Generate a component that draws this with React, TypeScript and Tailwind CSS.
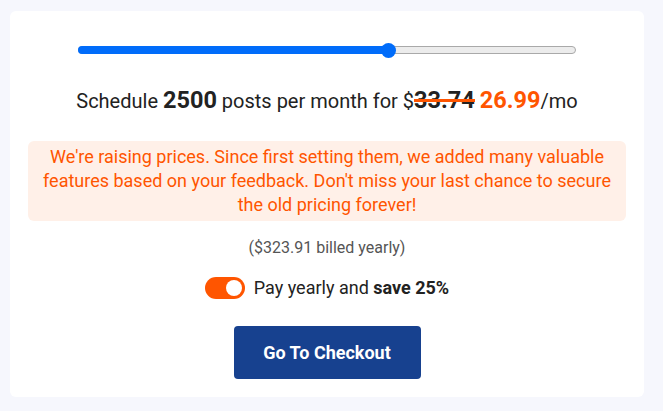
export default function App() {
  return (
    <main className="min-h-screen w-[663px] h-[411px] bg-[#f6f7fd] pt-[11px] pl-[10px] pr-[19px] font-['Roboto',sans-serif]">
      <section className="flex h-[386px] flex-col items-center rounded-md bg-white px-[18px] pt-[34px]">
        {/* slider */}
        <div className="relative h-[10px] w-[498px]">
          <div className="absolute left-0 right-0 top-[1px] h-[8px] rounded-full border border-[#a9a9a9] bg-[#ececec]" />
          <div className="absolute left-0 top-[1px] h-[8px] w-[312px] rounded-full bg-[#006cfa]" />
          <div className="absolute left-[303px] top-[-2px] h-[15px] w-[15px] rounded-full bg-[#006cfa]" />
        </div>

        <p className="mt-[32px] h-[28px] text-[20px] leading-[28px] text-[#222]">
          Schedule <span className="text-[23.5px] font-bold leading-[20px]">2500</span> posts per month for $
          <span className="relative text-[23.5px] font-bold leading-[20px]">
            33.74
            <span className="absolute left-0 right-0 top-[13px] h-[3px] bg-[#ff5500]" />
          </span>{' '}
          <span className="text-[23.5px] font-bold leading-[20px] text-[#ff5500]">26.99</span>/mo
        </p>

        <div className="mt-[26px] w-full rounded-md bg-[#fff0e8] px-[12px] py-[4px] text-center text-[18px] leading-[24px] text-[#ff5500]">
          We're raising prices. Since first setting them, we added many valuable features based on your feedback. Don't
          miss your last chance to secure the old pricing forever!
        </div>

        <p className="mt-[17px] text-[16px] leading-[20px] text-[#555]">($323.91 billed yearly)</p>

        <div className="mt-[19px] flex h-[22px] items-center gap-[9px]">
          <div className="flex h-[22px] w-[40px] items-center justify-end rounded-full bg-[#ff5500] pr-[3px]">
            <div className="h-[16px] w-[16px] rounded-full bg-white" />
          </div>
          <span className="text-[18px] leading-[22px] text-[#222]">
            Pay yearly and <span className="font-bold">save 25%</span>
          </span>
        </div>

        <button className="mt-[27px] h-[53px] w-[187px] rounded-[4px] bg-[#17418f] text-[18px] font-bold text-white">
          Go To Checkout
        </button>
      </section>
    </main>
  )
}
